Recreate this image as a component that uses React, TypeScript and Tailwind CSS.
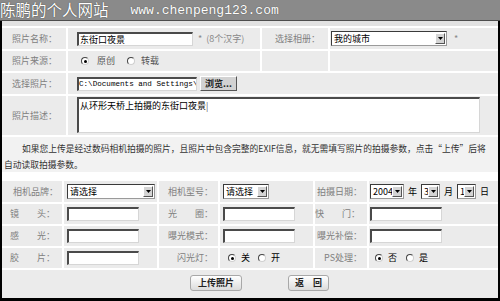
import React from 'react';

const cjk = "font-['Noto_Sans_CJK_SC','SimSun',sans-serif]";

const Cell: React.FC<{ children?: React.ReactNode; className?: string }> = ({ children, className = '' }) => (
  <div className={`bg-[#ebebeb] flex items-center text-[9px] text-black ${className}`}>{children}</div>
);

const Label: React.FC<{ children?: React.ReactNode; className?: string }> = ({ children, className = '' }) => (
  <div className={`bg-[#ebebeb] flex items-center text-[9px] text-[#808080] whitespace-nowrap ${className}`}>{children}</div>
);

const TextBox = ({ className = '', children }: { className?: string; children?: React.ReactNode }) => (
  <div
    className={`h-[14px] bg-white border-t-2 border-l-2 border-r border-b border-t-[#4a4a4a] border-l-[#4a4a4a] border-r-[#d6d6d6] border-b-[#d6d6d6] ${className}`}
  >
    {children}
  </div>
);

const Select = ({ value, className = '' }: { value: string; className?: string }) => (
  <div className={`h-[15px] flex items-stretch bg-white border border-t-[#3a3a3a] border-l-[#3a3a3a] border-r-[#9a9a9a] border-b-[#9a9a9a] ${className}`}>
    <span className="flex-1 pl-[2px] text-[9px] leading-[13px] text-black whitespace-nowrap overflow-hidden">{value}</span>
    <span className="w-[10px] my-[1px] mr-[1px] bg-[#d4d4d4] border border-t-white border-l-white border-r-[#555] border-b-[#555] flex items-center justify-center">
      <svg width="5" height="3" viewBox="0 0 5 3">
        <path d="M0 0h5L2.5 3z" fill="#000" />
      </svg>
    </span>
  </div>
);

const Radio = ({ checked = false }: { checked?: boolean }) => (
  <span className="w-[8px] h-[8px] rounded-full bg-white border border-t-[#444] border-l-[#444] border-r-[#cfcfcf] border-b-[#cfcfcf] flex items-center justify-center">
    {checked && <span className="w-[3px] h-[3px] rounded-full bg-black" />}
  </span>
);

const Button = ({ children, className = '' }: { children: React.ReactNode; className?: string }) => (
  <div
    className={`h-[16px] rounded-[3px] border border-[#a8a8a8] bg-gradient-to-b from-white to-[#dcdcdc] flex items-center justify-center text-[9px] font-bold text-[#222] ${className}`}
  >
    {children}
  </div>
);

export default function App() {
  return (
    <div className={`w-[500px] h-[301px] bg-black flex flex-col px-[2px] pb-[3px] overflow-hidden ${cjk}`}>
      {/* header with watermark */}
      <div className="h-[21px] -mx-[2px] bg-[#8a8a8a] border-b border-[#4d4d4d] flex items-start shrink-0">
        <span className="text-[15.5px] leading-[18px] text-white [text-shadow:0_0_1px_#222] whitespace-nowrap">陈鹏的个人网站</span>
        <span className="ml-[22px] mt-[3px] font-['Liberation_Mono',monospace] text-[13px] leading-[15px] text-white [text-shadow:0_0_1px_#444] whitespace-nowrap">
          www.chenpeng123.com
        </span>
      </div>
      <div className="h-[5px] bg-[#e2e2e2] shrink-0" />

      <div className="flex-1 bg-white pt-[2px] flex flex-col gap-[2px]">
        {/* photo info */}
        <div className="grid grid-cols-[64px_192px_66px_1fr] grid-rows-[21px_20px_21px_39px] gap-[2px]">
          <Label className="pl-[10px]">照片名称：</Label>
          <Cell className="pl-[9px]">
            <TextBox className="w-[116px] flex items-center pl-[1px] text-[9px] leading-[11px] text-black">东街口夜景</TextBox>
            <span className="ml-[5px] text-[#888]">*</span>
            <span className="ml-[4px] text-[#888]">(8个汉字)</span>
          </Cell>
          <Label className="pl-[13px]">选择相册：</Label>
          <Cell className="pl-[1px] gap-[7px]">
            <Select value="我的城市" className="w-[116px]" />
            <span className="text-[#888]">*</span>
          </Cell>

          <Label className="pl-[10px]">照片来源：</Label>
          <Cell className="pl-[13px]">
            <Radio checked />
            <span className="ml-[8px] text-[#555]">原创</span>
            <span className="ml-[12px]">
              <Radio />
            </span>
            <span className="ml-[6px] text-[#555]">转载</span>
          </Cell>
          <Cell />
          <Cell />

          <Label className="pl-[10px]">选择照片：</Label>
          <Cell className="col-span-3 pl-[9px] gap-[3px]">
            <div className="w-[120px] h-[14px] bg-white border-t-2 border-l-2 border-r border-b border-t-[#4a4a4a] border-l-[#4a4a4a] border-r-[#d6d6d6] border-b-[#d6d6d6] overflow-hidden whitespace-nowrap font-['Liberation_Mono',monospace] text-[7.6px] leading-[11px]">
              C:\Documents and Settings\$
            </div>
            <div className="w-[37px] h-[15px] bg-[#d2d2d2] border border-t-white border-l-white border-r-[#555] border-b-[#555] flex items-center justify-center text-[9px] font-bold text-[#222]">
              浏览...
            </div>
          </Cell>

          <Label className="pl-[10px]">照片描述：</Label>
          <Cell className="col-span-3 pl-[9px] items-start pt-[1px]">
            <div className="w-[403px] h-[36px] bg-white border-t-2 border-l-2 border-r border-b border-t-[#4a4a4a] border-l-[#4a4a4a] border-r-[#d6d6d6] border-b-[#d6d6d6] pl-[1px] pt-[1px] text-[9px] leading-[11px] text-black whitespace-nowrap">
              从环形天桥上拍摄的东街口夜景<span className="font-light">|</span>
            </div>
          </Cell>
        </div>

        {/* hint */}
        <div className="h-[35px] bg-[#f2f2f2] pl-[2px] pt-[4px] text-[8.75px] leading-[16px] text-[#333] whitespace-nowrap shrink-0">
          <span className="pl-[18px]">如果您上传是经过数码相机拍摄的照片，且照片中包含完整的EXIF信息，就无需填写照片的拍摄参数，点击“上传”后将</span>
          <br />
          自动读取拍摄参数。
        </div>

        {/* camera params */}
        <div className="mt-[7px] grid grid-cols-[60px_93px_59px_93px_52px_1fr] grid-rows-[21px_20px_20px_20px] gap-[2px]">
          <Label className="justify-end pr-[4px]">相机品牌：</Label>
          <Cell className="pl-[3px]">
            <Select value="请选择" className="w-[88px]" />
          </Cell>
          <Label className="justify-end pr-[5px]">相机型号：</Label>
          <Cell className="pl-[3px]">
            <Select value="请选择" className="w-[46px]" />
          </Cell>
          <Label className="justify-end pr-[5px]">拍摄日期：</Label>
          <Cell className="pl-[1px] text-[#888]">
            <Select value="2004" className="w-[34px]" />
            <span className="ml-[4px]">年</span>
            <Select value="3" className="w-[19px] ml-[4px]" />
            <span className="ml-[4px]">月</span>
            <Select value="1" className="w-[19px] ml-[4px]" />
            <span className="ml-[4px]">日</span>
          </Cell>

          <Label className="justify-end pr-[7px]">镜　　头：</Label>
          <Cell className="pl-[3px]">
            <TextBox className="w-[72px]" />
          </Cell>
          <Label className="justify-end pr-[5px]">光　　圈：</Label>
          <Cell className="pl-[3px]">
            <TextBox className="w-[72px]" />
          </Cell>
          <Label className="justify-end pr-[7px]">快　　门：</Label>
          <Cell className="pl-[1px]">
            <TextBox className="w-[72px]" />
          </Cell>

          <Label className="justify-end pr-[7px]">感　　光：</Label>
          <Cell className="pl-[3px]">
            <TextBox className="w-[72px]" />
          </Cell>
          <Label className="justify-end pr-[5px]">曝光模式：</Label>
          <Cell className="pl-[3px]">
            <TextBox className="w-[72px]" />
          </Cell>
          <Label className="justify-end pr-[5px]">曝光补偿：</Label>
          <Cell className="pl-[1px]">
            <TextBox className="w-[72px]" />
          </Cell>

          <Label className="justify-end pr-[7px]">胶　　片：</Label>
          <Cell className="pl-[3px]">
            <TextBox className="w-[72px]" />
          </Cell>
          <Label className="justify-end pr-[5px]">闪光灯：</Label>
          <Cell className="pl-[8px] text-[#555]">
            <Radio checked />
            <span className="ml-[5px]">关</span>
            <span className="ml-[8px]">
              <Radio />
            </span>
            <span className="ml-[5px]">开</span>
          </Cell>
          <Label className="justify-end pr-[5px]">PS处理：</Label>
          <Cell className="pl-[6px] text-[#555]">
            <Radio checked />
            <span className="ml-[5px]">否</span>
            <span className="ml-[9px]">
              <Radio />
            </span>
            <span className="ml-[5px]">是</span>
          </Cell>
        </div>

        {/* actions */}
        <div className="flex-1 bg-[#ebebeb] flex items-start pt-[5px] pl-[188px] gap-[46px]">
          <Button className="w-[52px]">上传照片</Button>
          <Button className="w-[41px]">返　回</Button>
        </div>
      </div>
    </div>
  );
}
